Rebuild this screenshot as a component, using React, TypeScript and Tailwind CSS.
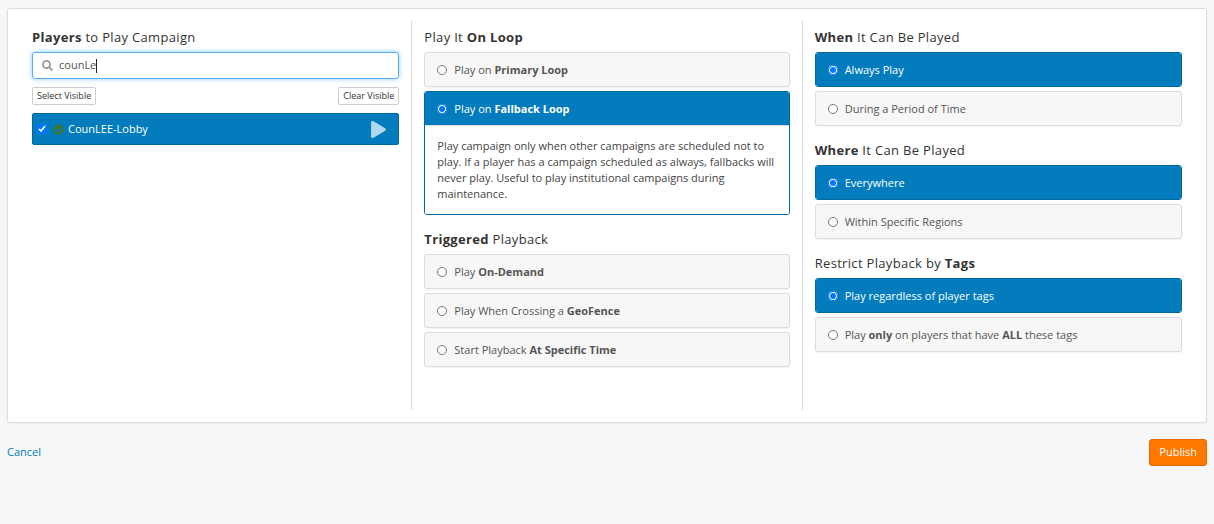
import { useState } from "react";
import type { ReactNode } from "react";
import clsx from "clsx";
import { FaCheckCircle, FaPlay, FaSearch } from "react-icons/fa";

type Option = {
  value: string;
  label: ReactNode;
  details?: string;
};

type OptionGroupProps = {
  name: string;
  title: ReactNode;
  options: Option[];
  selected: string;
  onSelect: (value: string) => void;
};

const loopOptions: Option[] = [
  { value: "primary", label: <>Play on <b>Primary Loop</b></> },
  {
    value: "fallback",
    label: <>Play on <b>Fallback Loop</b></>,
    details:
      "Play campaign only when other campaigns are scheduled not to play. If a player has a campaign scheduled as always, fallbacks will never play. Useful to play institutional campaigns during maintenance.",
  },
];

const triggerOptions: Option[] = [
  { value: "on-demand", label: <>Play <b>On-Demand</b></> },
  { value: "geofence", label: <>Play When Crossing a <b>GeoFence</b></> },
  { value: "specific-time", label: <>Start Playback <b>At Specific Time</b></> },
];

const whenOptions: Option[] = [
  { value: "always", label: "Always Play" },
  { value: "period", label: "During a Period of Time" },
];

const whereOptions: Option[] = [
  { value: "everywhere", label: "Everywhere" },
  { value: "regions", label: "Within Specific Regions" },
];

const tagOptions: Option[] = [
  { value: "any", label: "Play regardless of player tags" },
  { value: "all", label: <>Play <b>only</b> on players that have <b>ALL</b> these tags</> },
];

function Heading({ children }: { children: ReactNode }) {
  return <h2 className="mb-1 text-[13px] leading-[21px] tracking-wide text-[#333]">{children}</h2>;
}

function OptionGroup({ name, title, options, selected, onSelect }: OptionGroupProps) {
  return (
    <section>
      <Heading>{title}</Heading>
      <div className="flex flex-col gap-1" role="radiogroup">
        {options.map((option) => {
          const active = option.value === selected;
          return (
            <div
              key={option.value}
              className={clsx(
                "overflow-hidden rounded-[3px] border",
                active ? "border-[#006a9f]" : "border-[#dcdcdc] bg-[#f7f7f7] shadow-xs"
              )}
            >
              <label
                className={clsx(
                  "flex items-center gap-[7px] px-3 py-2 leading-[17px]",
                  active ? "bg-[#027cbc] font-medium text-white" : "text-[#555]"
                )}
              >
                <input
                  type="radio"
                  name={name}
                  value={option.value}
                  checked={active}
                  onChange={() => onSelect(option.value)}
                  className="size-[10px] shrink-0"
                />
                <span>{option.label}</span>
              </label>
              {active && option.details && (
                <p className="border-t border-[#dcdcdc] bg-white px-3 py-3 leading-4 text-[#444]">{option.details}</p>
              )}
            </div>
          );
        })}
      </div>
    </section>
  );
}

export default function App() {
  const [search, setSearch] = useState("counLe");
  const [playerChecked, setPlayerChecked] = useState(true);
  const [playback, setPlayback] = useState("fallback");
  const [when, setWhen] = useState("always");
  const [where, setWhere] = useState("everywhere");
  const [tags, setTags] = useState("any");

  return (
    <div className="min-h-screen bg-[#f6f7f9] px-[7px] py-2 font-['Open_Sans',sans-serif] text-[11px] text-[#444]">
      <main className="grid grid-cols-3 rounded-[3px] border border-[#dcdcdc] bg-white p-3 shadow-xs">
        <div className="px-3 pt-1.5">
          <Heading><b>Players</b> to Play Campaign</Heading>
          <label className="flex h-[27px] items-center rounded-[3px] border border-[#5aaef0] px-[9px] shadow-[0_0_5px_#8cc8fa]">
            <FaSearch className="mr-1.5 size-[11px] shrink-0 text-[#999]" />
            <input
              type="text"
              aria-label="Search players"
              value={search}
              onChange={(e) => setSearch(e.target.value)}
              className="max-w-full bg-transparent text-[#555] caret-transparent outline-none [field-sizing:content]"
            />
            <span className="h-[14px] w-px shrink-0 bg-[#222]" />
          </label>
          <div className="mt-2 flex justify-between text-[9px] leading-4 text-[#333]">
            <button type="button" onClick={() => setPlayerChecked(true)} className="rounded-xs border border-[#ccc] bg-white px-1">
              Select Visible
            </button>
            <button type="button" onClick={() => setPlayerChecked(false)} className="rounded-xs border border-[#ccc] bg-white px-1">
              Clear Visible
            </button>
          </div>
          <div className="mt-2 flex h-8 items-center justify-between rounded-xs border border-[#006a9f] bg-[#027cbc] pr-[11px] pl-1 font-medium text-white">
            <label className="flex items-center">
              <input
                type="checkbox"
                checked={playerChecked}
                onChange={(e) => setPlayerChecked(e.target.checked)}
                className="size-[10px]"
              />
              <FaCheckCircle className="mr-1 ml-1.5 size-[11px] text-[#37763f]" />
              CounLEE-Lobby
            </label>
            <button type="button" aria-label="Preview player">
              <FaPlay className="size-[17px] text-[#b3d8eb]" />
            </button>
          </div>
        </div>

        <div className="flex flex-col gap-[14px] border-x border-[#dcdcdc] px-3 pt-1.5 pb-[43px]">
          <OptionGroup name="playback" title={<>Play It <b>On Loop</b></>} options={loopOptions} selected={playback} onSelect={setPlayback} />
          <OptionGroup name="playback" title={<><b>Triggered</b> Playback</>} options={triggerOptions} selected={playback} onSelect={setPlayback} />
        </div>

        <div className="flex flex-col gap-[14px] px-3 pt-1.5">
          <OptionGroup name="when" title={<><b>When</b> It Can Be Played</>} options={whenOptions} selected={when} onSelect={setWhen} />
          <OptionGroup name="where" title={<><b>Where</b> It Can Be Played</>} options={whereOptions} selected={where} onSelect={setWhere} />
          <OptionGroup name="tags" title={<>Restrict Playback by <b>Tags</b></>} options={tagOptions} selected={tags} onSelect={setTags} />
        </div>
      </main>

      <footer className="mt-4 flex items-center justify-between">
        <a href="#" className="text-[#027cbc]">Cancel</a>
        <button type="button" className="h-[27px] rounded-[3px] border border-[#e56b00] bg-[#ff7800] px-[9px] font-medium text-white">
          Publish
        </button>
      </footer>
    </div>
  );
}
